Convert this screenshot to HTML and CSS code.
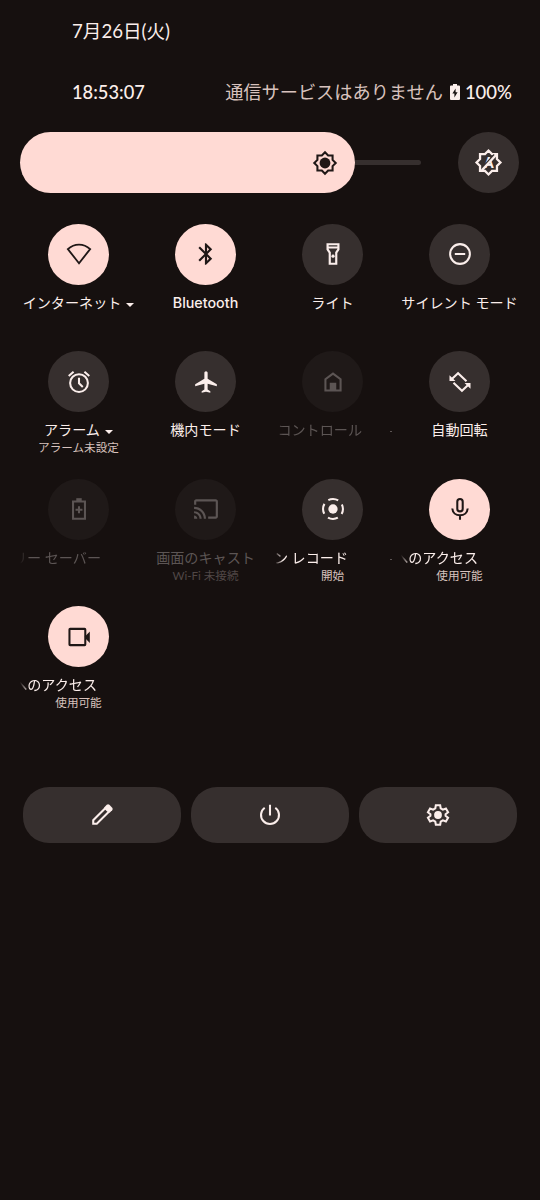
FILE: index.html
```
<!DOCTYPE html>
<html lang="ja">
<head>
    <meta charset="UTF-8">
    <title>クイック設定</title>
    <link rel="stylesheet" href="styles.css">
</head>
<body>
    <div class="date">7月26日(火)</div>
    <div class="status">
        <span class="clock">18:53:07</span>
        <span class="carrier">通信サービスはありません</span>
        <svg class="battery" viewBox="0 0 10 16"><path fill="currentColor" fill-rule="evenodd" d="M3 0h4v1.600h2q1 0 1 1V15q0 1-1 1H1q-1 0-1-1V2.600q0-1 1-1h2zM5.600 4.500L2.400 9.600h2v4L7.600 8.300h-2z"/></svg>
        <span class="percent">100%</span>
    </div>

    <div class="brightness">
        <div class="slider">
            <div class="slider-fill">
                <svg class="icon" viewBox="0 0 24 24"><path d="M19 9.100V5h-4.100L12 2.100 9.100 5H5v4.100L2.100 12 5 14.900V19h4.100L12 21.900 14.900 19H19v-4.100L21.900 12z"/><circle class="solid" cx="12" cy="12" r="5"/></svg>
            </div>
            <div class="slider-track"></div>
        </div>
        <div class="circle">
            <svg class="icon auto" viewBox="0 0 24 24"><path d="M19 9.100V5h-4.100L12 2.100 9.100 5H5v4.100L2.100 12 5 14.900V19h4.100L12 21.900 14.900 19H19v-4.100L21.900 12z"/><text x="12.300" y="16.200">A</text><path class="gap" d="M7.500 16L17 5.700"/><path d="M6.500 18.500L19 5"/></svg>
        </div>
    </div>

    <div class="tiles">
        <div class="tile on">
            <div class="circle"><svg class="icon thin" viewBox="0 0 24 24"><path d="M12 20.500L1.700 7.500C4.600 4.800 8.100 3.300 12 3.300s7.400 1.500 10.300 4.200z"/></svg></div>
            <div class="label">インターネット<i class="arrow"></i></div>
        </div>
        <div class="tile on">
            <div class="circle"><svg class="icon" viewBox="0 0 24 24"><path class="solid" d="M17.710 7.710L12 2h-1v7.590L6.410 5 5 6.410 10.590 12 5 17.590 6.410 19 11 14.410V22h1l5.710-5.710-4.300-4.290 4.300-4.290zM13 5.830l1.880 1.880L13 9.590V5.830zm1.880 10.460L13 18.170v-3.760l1.880 1.880z"/></svg></div>
            <div class="label latin">Bluetooth</div>
        </div>
        <div class="tile">
            <div class="circle"><svg class="icon" viewBox="0 0 24 24"><path class="solid" fill-rule="evenodd" d="M6 2v6l2 3v11h8V11l2-3V2zM16 4v1H8V4zM14 10.400V20h-4v-9.600l-2-3V7h8v.400z"/><circle class="solid" cx="12" cy="14" r="1.500"/></svg></div>
            <div class="label">ライト</div>
        </div>
        <div class="tile">
            <div class="circle"><svg class="icon" viewBox="0 0 24 24"><circle cx="12" cy="12" r="9.100"/><path d="M7.200 12h9.600"/></svg></div>
            <div class="label">サイレント モード</div>
        </div>

        <div class="tile">
            <div class="circle"><svg class="icon" viewBox="0 0 24 24"><circle cx="12" cy="13" r="8.200"/><path d="M12 8v5.200l3.500 3.400M2.500 6.400L7 2.600M21.500 6.400L17 2.600"/></svg></div>
            <div class="label">アラーム<i class="arrow"></i></div>
            <div class="sub">アラーム未設定</div>
        </div>
        <div class="tile">
            <div class="circle"><svg class="icon" viewBox="0 0 24 24"><path class="solid" d="M22 16v-2l-8.500-5V3.500C13.500 2.670 12.830 2 12 2s-1.500.670-1.500 1.500V9L2 14v2l8.500-2.500V19L8 20.500V22l4-1 4 1v-1.500L13.500 19v-5.500z"/></svg></div>
            <div class="label">機内モード</div>
        </div>
        <div class="tile off">
            <div class="circle"><svg class="icon" viewBox="0 0 24 24"><path d="M5 19.800V9.400l7-5.200 7 5.200v10.400z"/><path class="solid" d="M9 12.700h6V20H9z"/></svg></div>
            <div class="label marquee end-29">コントロール</div>
            <i class="dot"></i>
        </div>
        <div class="tile">
            <div class="circle"><svg class="icon" viewBox="0 0 24 24"><path d="M4.500 9.300L10.200 3.900 18 11.400M19.500 14.700L13.800 20.100 6 12.600"/><path class="solid" d="M2.300 5.800v5.300h5.500zM21.700 18.200v-5.300h-5.500z"/></svg></div>
            <div class="label">自動回転</div>
        </div>

        <div class="tile off">
            <div class="circle"><svg class="icon" viewBox="0 0 24 24"><path d="M6.500 5h11v16h-11zM12 9.500v6.400M8.800 12.700h6.400"/><path class="solid" d="M9.500 2h5v3h-5z"/></svg></div>
            <div class="label marquee end-36">リー セーバー</div>
        </div>
        <div class="tile off">
            <div class="circle"><svg class="icon" viewBox="0 0 24 24"><path class="solid" d="M21 3H3c-1.100 0-2 .9-2 2v3h2V5h18v14h-7v2h7c1.100 0 2-.9 2-2V5c0-1.100-.9-2-2-2zM1 18v3h3c0-1.660-1.340-3-3-3zm0-4v2c2.760 0 5 2.240 5 5h2c0-3.870-3.130-7-7-7zm0-4v2c4.970 0 9 4.030 9 9h2c0-6.080-4.930-11-11-11z"/></svg></div>
            <div class="label">画面のキャスト</div>
            <div class="sub">Wi-Fi 未接続</div>
        </div>
        <div class="tile">
            <div class="circle"><svg class="icon" viewBox="0 0 24 24"><circle class="solid" cx="12" cy="12" r="4.300"/><circle class="ring" cx="12" cy="12" r="9.200"/></svg></div>
            <div class="label marquee end-43">ン レコード</div>
            <div class="sub">開始</div>
            <i class="dot"></i>
        </div>
        <div class="tile on">
            <div class="circle"><svg class="icon" viewBox="0 0 24 24"><rect x="9.500" y="2.800" width="5" height="11.400" rx="2.500"/><path d="M4.900 11.500c.3 4 3.300 6.300 7.100 6.300s6.800-2.300 7.100-6.300M12 18v4"/></svg></div>
            <div class="label marquee end-41">へのアクセス</div>
            <div class="sub">使用可能</div>
            <i class="dot left"></i>
        </div>

        <div class="tile on">
            <div class="circle"><svg class="icon" viewBox="0 0 24 24"><rect x="3.200" y="4.500" width="14.600" height="15" rx=".6"/><path class="solid" d="M17.500 11.500l4.500-4.500v10.500l-4.500-4.500z"/></svg></div>
            <div class="label marquee end-41">へのアクセス</div>
            <div class="sub">使用可能</div>
        </div>
    </div>

    <div class="footer">
        <div class="button"><svg class="icon" viewBox="0 0 24 24"><path d="M3.900 20.100v-3.300L15 5.700l3.300 3.300L7.200 20.100z"/><path class="solid" d="M14 5l2.400-2.400q1.200-1.100 2.400 0l2.600 2.600q1.100 1.200 0 2.400L19 10z"/></svg></div>
        <div class="button"><svg class="icon" viewBox="0 0 24 24"><path d="M12 2.500v10M7.100 5.300a8.300 8.300 0 1 0 9.800 0"/></svg></div>
        <div class="button"><svg class="icon" viewBox="0 0 24 24"><path d="M10 3h4l.5 2.900 2 1.200 2.800-1.100 2 3.500-2.300 1.800v1.400l2.300 1.800-2 3.500-2.800-1.100-2 1.200L14 21h-4l-.5-2.900-2-1.200L4.700 18l-2-3.500L5 12.700v-1.400L2.700 9.500l2-3.500 2.800 1.100 2-1.200z"/><circle class="solid" cx="12" cy="12" r="3.600"/></svg></div>
    </div>
</body>
</html>
```
FILE: styles.css
```
* {
    box-sizing: border-box;
}
body {
    margin: 0;
    min-height: 1200px;
    background-color: #16100f;
    color: #fbeeeb;
    font-family: Lato, "Noto Sans CJK JP", sans-serif;
}
.date {
    padding: 18px 0 0 72px;
    font-size: 18.600px;
    line-height: 26px;
    height: 79px;
}
.status {
    display: flex;
    align-items: center;
    height: 26px;
    padding: 0 28px 0 72px;
    font-size: 18.200px;
    line-height: 26px;
    white-space: nowrap;
}
.clock {
    font-size: 18.300px;
    font-weight: 500;
    margin-right: auto;
}
.carrier {
    color: #d8c2bd;
}
.battery {
    width: 10px;
    height: 16px;
    margin: 0 5px 0 7px;
}
.percent {
    font-size: 18.500px;
    font-weight: 500;
}

/* brightness */
.brightness {
    display: flex;
    justify-content: space-between;
    margin: 27px 21px 0 20px;
}
.slider {
    display: flex;
    align-items: center;
    width: 400.500px;
}
.slider-fill {
    display: flex;
    align-items: center;
    justify-content: flex-end;
    width: 335px;
    height: 61px;
    padding-right: 17px;
    border-radius: 31px;
    background-color: #ffdad4;
    color: #1f1716;
}
.slider-track {
    flex: 1;
    height: 5px;
    border-radius: 0 3px 3px 0;
    background-color: #362f2e;
}
.circle {
    display: flex;
    align-items: center;
    justify-content: center;
    width: 61px;
    height: 61px;
    border-radius: 50%;
    background-color: #362f2e;
}

/* icons */
.icon {
    width: 26px;
    height: 26px;
    fill: none;
    stroke: currentColor;
    stroke-width: 1.900;
}
.icon .solid {
    fill: currentColor;
    stroke: none;
}
.icon.thin {
    stroke-width: 1.700;
}
.icon.auto {
    width: 29px;
    height: 29px;
}
.icon .gap {
    stroke: #362f2e;
}
.icon .ring {
    stroke-dasharray: 9.500 4.950;
    stroke-dashoffset: 4.750;
}
.icon text {
    fill: currentColor;
    stroke: none;
    font: bold 12px Roboto, sans-serif;
    text-anchor: middle;
}

/* tiles */
.tiles {
    display: grid;
    grid-template-columns: repeat(4, 127px);
    grid-auto-rows: 127.500px;
    margin: 30.500px 0 0 15px;
}
.tile {
    position: relative;
    display: flex;
    flex-direction: column;
    align-items: center;
}
.tile.on .circle {
    background-color: #ffdad4;
    color: #1f1716;
}
.tile.off .circle {
    background-color: #1f1918;
    color: #5c5554;
}
.label {
    display: flex;
    align-items: center;
    justify-content: center;
    width: 117px;
    height: 20px;
    margin-top: 8px;
    font-size: 14.100px;
    line-height: 20px;
    white-space: nowrap;
}
.latin {
    font-family: Inter, sans-serif;
    font-size: 14.300px;
    font-weight: 500;
}
.sub {
    font-size: 11.600px;
    line-height: 16px;
    color: #d8c2bd;
}
.off .label {
    color: #5c5554;
}
.off .sub {
    color: #504746;
}
.arrow {
    margin: 4px 0 0 5px;
    border: 4px solid transparent;
    border-top: 4px solid #fbeeeb;
    border-bottom: 0;
}
.marquee {
    justify-content: flex-end;
    overflow: hidden;
    -webkit-mask-image: linear-gradient(to right, transparent, #000 9px);
    mask-image: linear-gradient(to right, transparent, #000 9px);
}
.end-29 {
    padding-right: 29px;
}
.end-36 {
    padding-right: 36px;
}
.end-41 {
    padding-right: 40px;
}
.end-43 {
    padding-right: 43px;
}
.dot {
    position: absolute;
    top: 80px;
    right: 4px;
    width: 2px;
    height: 1px;
    background-color: #5c5554;
}
.dot.left {
    display: none;
}

.footer {
    display: grid;
    grid-template-columns: repeat(3, 1fr);
    gap: 10px;
    margin: 53.500px 23px 0;
}
.button {
    display: flex;
    align-items: center;
    justify-content: center;
    height: 56px;
    border-radius: 26px;
    background-color: #362f2e;
}
```
